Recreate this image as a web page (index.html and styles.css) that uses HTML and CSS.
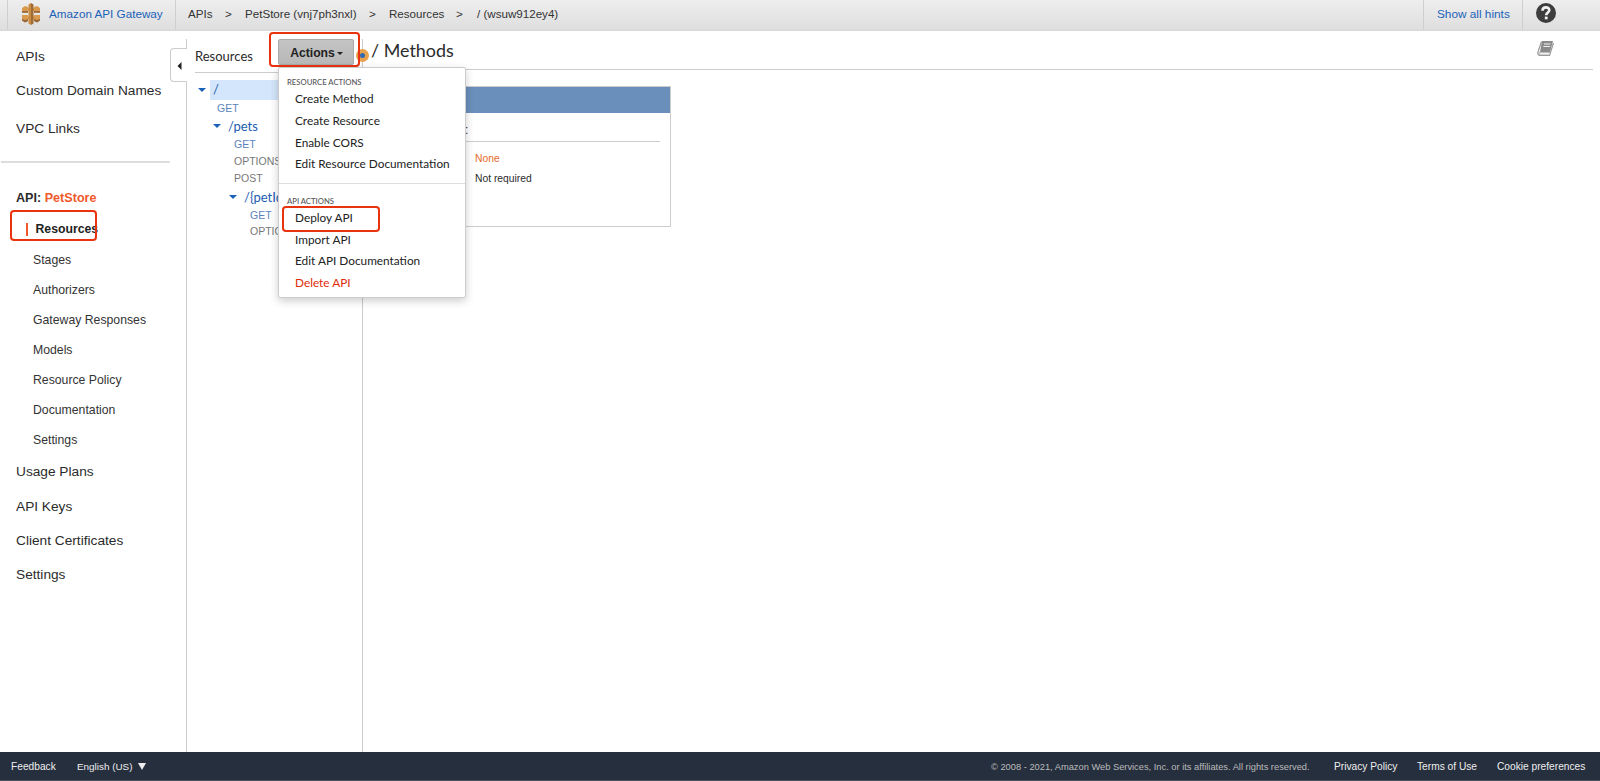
FILE: index.html
```html
<!DOCTYPE html>
<html lang="en">
<head>
<meta charset="utf-8">
<title>Amazon API Gateway</title>
<link rel="stylesheet" href="styles.css">
</head>
<body>
<header class="topbar">
  <a class="brand">
    <svg class="logo" width="20" height="22" viewBox="0 0 20 22">
      <path fill="#d99a4e" d="M1 5l3-2 3 1v5.500H1zM1 12h6v6l-3 1.500L1 17.500zM19 5l-3-2-3 1v5.500h6zM19 12h-6v6l3 1.500 3-2z"/>
      <path fill="#d99a4e" d="M6 5h8v3H6zM6 13.500h8v3H6z"/>
      <path fill="#98673a" d="M1 8h6v1.700H1zM13 8h6v1.700h-6zM1 16l3 1 3-1v2l-3 1.500-3-2zM19 16l-3 1-3-1v2l3 1.500 3-2z"/>
      <path fill="#c98a41" d="M7.500 1.500L10 0v22l-2.500-1.500z"/>
      <path fill="#a06c34" d="M10 0l2.500 1.500v19L10 22z"/>
    </svg>
    <span>Amazon API Gateway</span>
  </a>
  <nav class="crumbs">
    <span class="c1">APIs</span><span class="c2">&gt;</span><span class="c3">PetStore (vnj7ph3nxl)</span><span class="c4">&gt;</span><span class="c5">Resources</span><span class="c6">&gt;</span><span>/ (wsuw912ey4)</span>
  </nav>
  <a class="hints">Show all hints</a>
  <div class="help">
    <svg width="20" height="20" viewBox="0 0 20 20"><circle cx="10" cy="10" r="10" fill="#3d3d3d"/><path d="M6.500 7.700C6.500 3.200 13.500 3.500 13.300 7.300C13.200 9.400 10.200 9.500 10.200 12.200" fill="none" stroke="#f2f2f2" stroke-width="2.600"/><rect x="8.800" y="13.600" width="2.800" height="2.700" fill="#f2f2f2"/></svg>
  </div>
</header>
<div class="main">
  <aside class="sidebar">
    <div class="rail"><div class="collapse"><svg width="5" height="8" viewBox="0 0 5 8"><path d="M4.500 0v8L.5 4z" fill="#222"/></svg></div></div>
    <nav>
      <a class="nav apis">APIs</a>
      <a class="nav domains">Custom Domain Names</a>
      <a class="nav vpc">VPC Links</a>
      <div class="rule"></div>
      <div class="api">API: <b>PetStore</b></div>
      <div class="sub current"><span class="bar"></span>Resources<div class="mark mark-resources"></div></div>
      <a class="sub">Stages</a>
      <a class="sub">Authorizers</a>
      <a class="sub">Gateway Responses</a>
      <a class="sub">Models</a>
      <a class="sub">Resource Policy</a>
      <a class="sub">Documentation</a>
      <a class="sub">Settings</a>
      <a class="nav">Usage Plans</a>
      <a class="nav">API Keys</a>
      <a class="nav">Client Certificates</a>
      <a class="nav">Settings</a>
    </nav>
  </aside>
  <section class="resources">
    <div class="res-head">
      <span class="res-title">Resources</span>
      <button class="actions">Actions<i></i></button>
      <div class="mark mark-actions"></div>
      <div class="menu">
        <div class="group">RESOURCE ACTIONS</div>
        <a>Create Method</a><a>Create Resource</a><a>Enable CORS</a><a>Edit Resource Documentation</a>
        <div class="divider"></div>
        <div class="group">API ACTIONS</div>
        <a class="deploy">Deploy API<span class="mark mark-deploy"></span></a><a>Import API</a><a>Edit API Documentation</a><a class="danger">Delete API</a>
      </div>
    </div>
    <div class="tree">
      <div class="node l0"><i></i><span class="selected">/</span></div>
      <div class="method m0 get">GET</div>
      <div class="node l1"><i></i><span>/pets</span></div>
      <div class="method m1 get">GET</div>
      <div class="method m1">OPTIONS</div>
      <div class="method m1">POST</div>
      <div class="node l2"><i></i><span>/{petId}</span></div>
      <div class="method m2 get">GET</div>
      <div class="method m2">OPTIONS</div>
    </div>
    <span class="handle"></span>
  </section>
  <main class="content">
    <div class="title"><h1>/ Methods</h1>
      <svg class="book" width="18" height="17" viewBox="0 0 18 17"><path d="M5 1h11l-3 11H3z" fill="#8a8a8a"/><path d="M4.500 1.500L1 12c-.5 2 .5 3.500 2 3.500h9.500L16.500 3" fill="none" stroke="#999" stroke-width="1.200"/><path d="M2 12.500h10.700L13 15H2.500z" fill="#eee" stroke="#999" stroke-width=".6"/><path d="M7 4h6.500M6.400 6.500h6.500" stroke="#f3f3f3" stroke-width="1.200"/></svg>
    </div>
    <div class="card">
      <div class="card-head"></div>
      <div class="card-sub">:</div>
      <div class="value none">None</div>
      <div class="value">Not required</div>
    </div>
  </main>
</div>
<footer class="footer">
  <span class="feedback">Feedback</span><span class="lang">English (US)</span><i></i>
  <span class="copy">© 2008 - 2021, Amazon Web Services, Inc. or its affiliates. All rights reserved.</span>
  <span class="privacy">Privacy Policy</span><span class="terms">Terms of Use</span><span class="cookies">Cookie preferences</span>
</footer>
</body>
</html>
```
FILE: styles.css
```css
* { box-sizing: border-box; }
body { margin: 0; width: 1600px; height: 781px; display: flex; flex-direction: column; overflow: hidden; background: #fff; color: #2b2b2b; font-family: "Liberation Sans", Arial, sans-serif; white-space: nowrap; }
.topbar { height: 31px; flex: none; display: flex; font-size: 11.6px; line-height: 28px; color: #333; background: linear-gradient(#eee, #dedede); border-bottom: 1px solid #d8d8d8; }
.brand { display: flex; width: 169px; margin-left: 7px; border-left: 1px solid #cfcfcf; border-right: 1px solid #cfcfcf; color: #1a62b8; padding-left: 13px; font-size: 11.700px; }
.logo { margin: 3px 8px 0 0; }
.crumbs { display: flex; padding-left: 12px; flex: 1; }
.c1 { width: 37px; }
.c2 { width: 20px; }
.c3 { width: 124px; }
.c4 { width: 20px; }
.c5 { width: 67px; }
.c6 { width: 21px; }
.hints { width: 100px; padding-left: 13px; border-left: 1px solid #cfcfcf; border-right: 1px solid #cfcfcf; color: #1a62b8; font-size: 11.800px; }
.help { width: 77px; padding: 3px 0 0 13px; line-height: 0; }
.main { flex: 1; display: flex; min-height: 0; }
.sidebar { width: 187px; flex: none; position: relative; }
.rail { position: absolute; top: 8px; right: 0; bottom: 0; width: 17px; border-right: 1px solid #ccc; }
.collapse { position: absolute; top: 9px; left: 0; width: 17px; height: 34px; border: 1px solid #ccc; border-right: 0; border-radius: 4px 0 0 4px; background: #fff; display: flex; align-items: center; padding: 1px 0 0 6px; }
.nav { display: block; height: 34.3px; line-height: 34.3px; padding-left: 16px; font-size: 13.700px; }
.apis { margin-top: 9px; }
.vpc { margin-top: 3px; }
.rule { height: 2px; background: #ddd; margin: 15.100px 17px 0 1px; }
.api { height: 30px; line-height: 30px; margin-top: 20px; padding-left: 16px; font-size: 12.600px; font-weight: bold; }
.api b { color: #f0592b; }
.sub { display: block; height: 30.100px; line-height: 30.100px; padding-left: 33px; font-size: 12.250px; color: #333; }
.current { position: relative; display: flex; align-items: center; font-weight: bold; margin-top: 1.500px; padding-left: 26px; color: #222; }
.bar { width: 2px; height: 13px; background: #f0592b; margin-right: 7.500px; }
.mark { position: absolute; border: 2px solid #e9330f; border-radius: 4px; }
.mark-resources { left: 10px; top: -4px; width: 87px; height: 31px; }
.mark-actions { left: 74px; top: 1px; width: 91px; height: 35px; }
.mark-deploy { left: 3px; top: -1px; width: 98px; height: 26px; }
.resources { width: 176px; flex: none; position: relative; font-family: Lato, sans-serif; }
.resources::after { content: ""; position: absolute; right: 0; top: 8px; bottom: 0; width: 1px; background: #ccc; }
.res-head { position: relative; z-index: 3; display: flex; height: 42px; margin-left: 8px; border-bottom: 1px solid #ccc; }
.res-title { width: 83px; padding-top: 16px; font-size: 13px; line-height: 18px; }
.actions { width: 76px; height: 26px; margin: 8px 0 0; padding: 1px 0 0 1px; border: 1px solid #aaa; border-radius: 2px; background: linear-gradient(#c4c4c4, #b8b8b8); font: bold 12.2px "Liberation Sans", sans-serif; color: #222; }
.actions i { display: inline-block; border: 3px solid transparent; border-top-color: #222; border-bottom: 0; margin: 0 0 2px 2px; }
.menu { position: absolute; left: 83px; top: 36px; width: 188px; height: 231px; padding-top: 9px; background: #fff; border: 1px solid #ccc; border-radius: 2px; box-shadow: 0 3px 8px rgba(0,0,0,.2); font-size: 11.820px; }
.group { height: 11px; line-height: 11px; padding-left: 8px; font-size: 7.700px; font-weight: 500; color: #555; }
.menu a { display: block; height: 21.800px; line-height: 21.800px; padding-left: 16px; color: #222; }
.divider { height: 1px; background: #ddd; margin: 8px 0 11.600px; }
.menu .deploy { position: relative; }
.menu .danger { color: #e02b0c; }
.tree { padding: 7px 0 0 11px; position: relative; z-index: 1; }
.node { display: flex; align-items: center; height: 20px; font-size: 13px; color: #1a5db0; }
.node i { border: 4px solid transparent; border-top-color: #1a62b8; border-bottom: 0; margin-right: 4px; }
.node span { padding-left: 3px; }
.node .selected { flex: 1; height: 20px; line-height: 19px; background: #d4e6fb; margin-right: 1px; }
.l1 { padding-left: 15px; margin-top: -.5px; }
.l2 { padding-left: 31px; }
.method { font: 10.500px/16.800px "Liberation Sans", sans-serif; height: 16.800px; color: #777; }
.get { color: #5a83ba; }
.m0 { padding-left: 19px; }
.m1 { padding-left: 36px; }
.m2 { padding-left: 52px; }
.handle { position: absolute; z-index: 2; left: 169px; top: 18px; width: 13px; height: 13px; border-radius: 50%; border: 4px solid #e8a24e; background: #2f69b5; }
.content { flex: 1; }
.title { height: 39px; border-bottom: 1px solid #ccc; margin: 0 7px 0 -1px; display: flex; justify-content: space-between; padding: 0 38px 0 9px; }
h1 { margin: 5px 0 0; font: 400 17.900px/28px Lato, sans-serif; }
.book { margin-top: 9px; }
.card { width: 293px; height: 141px; margin: 16px 0 0 15px; border: 1px solid #ccc; font-size: 10.300px; }
.card-head { height: 26px; background: #6b8fbb; }
.card-sub { height: 29px; margin: 0 10px 0 11px; padding: 10px 0 0 75px; border-bottom: 1px solid #ccc; font-size: 12px; }
.value { height: 20px; line-height: 20px; padding-left: 96px; }
.none { margin-top: 7px; color: #e4692a; }
.footer { height: 29px; flex: none; display: flex; align-items: center; background: #262f3e; border-bottom: 1px solid #4a525e; color: #eee; font-size: 10.200px; padding: 1px 15px 0 11px; }
.feedback { width: 66px; }
.lang { font-size: 9.900px; }
.footer i { border: 4px solid transparent; border-top: 7px solid #eee; border-bottom: 0; margin-left: 6px; }
.copy { margin-left: auto; width: 343px; font-size: 9.300px; color: #bbb; }
.privacy { width: 83px; }
.terms { width: 80px; }
.cookies { width: 88px; }
```
